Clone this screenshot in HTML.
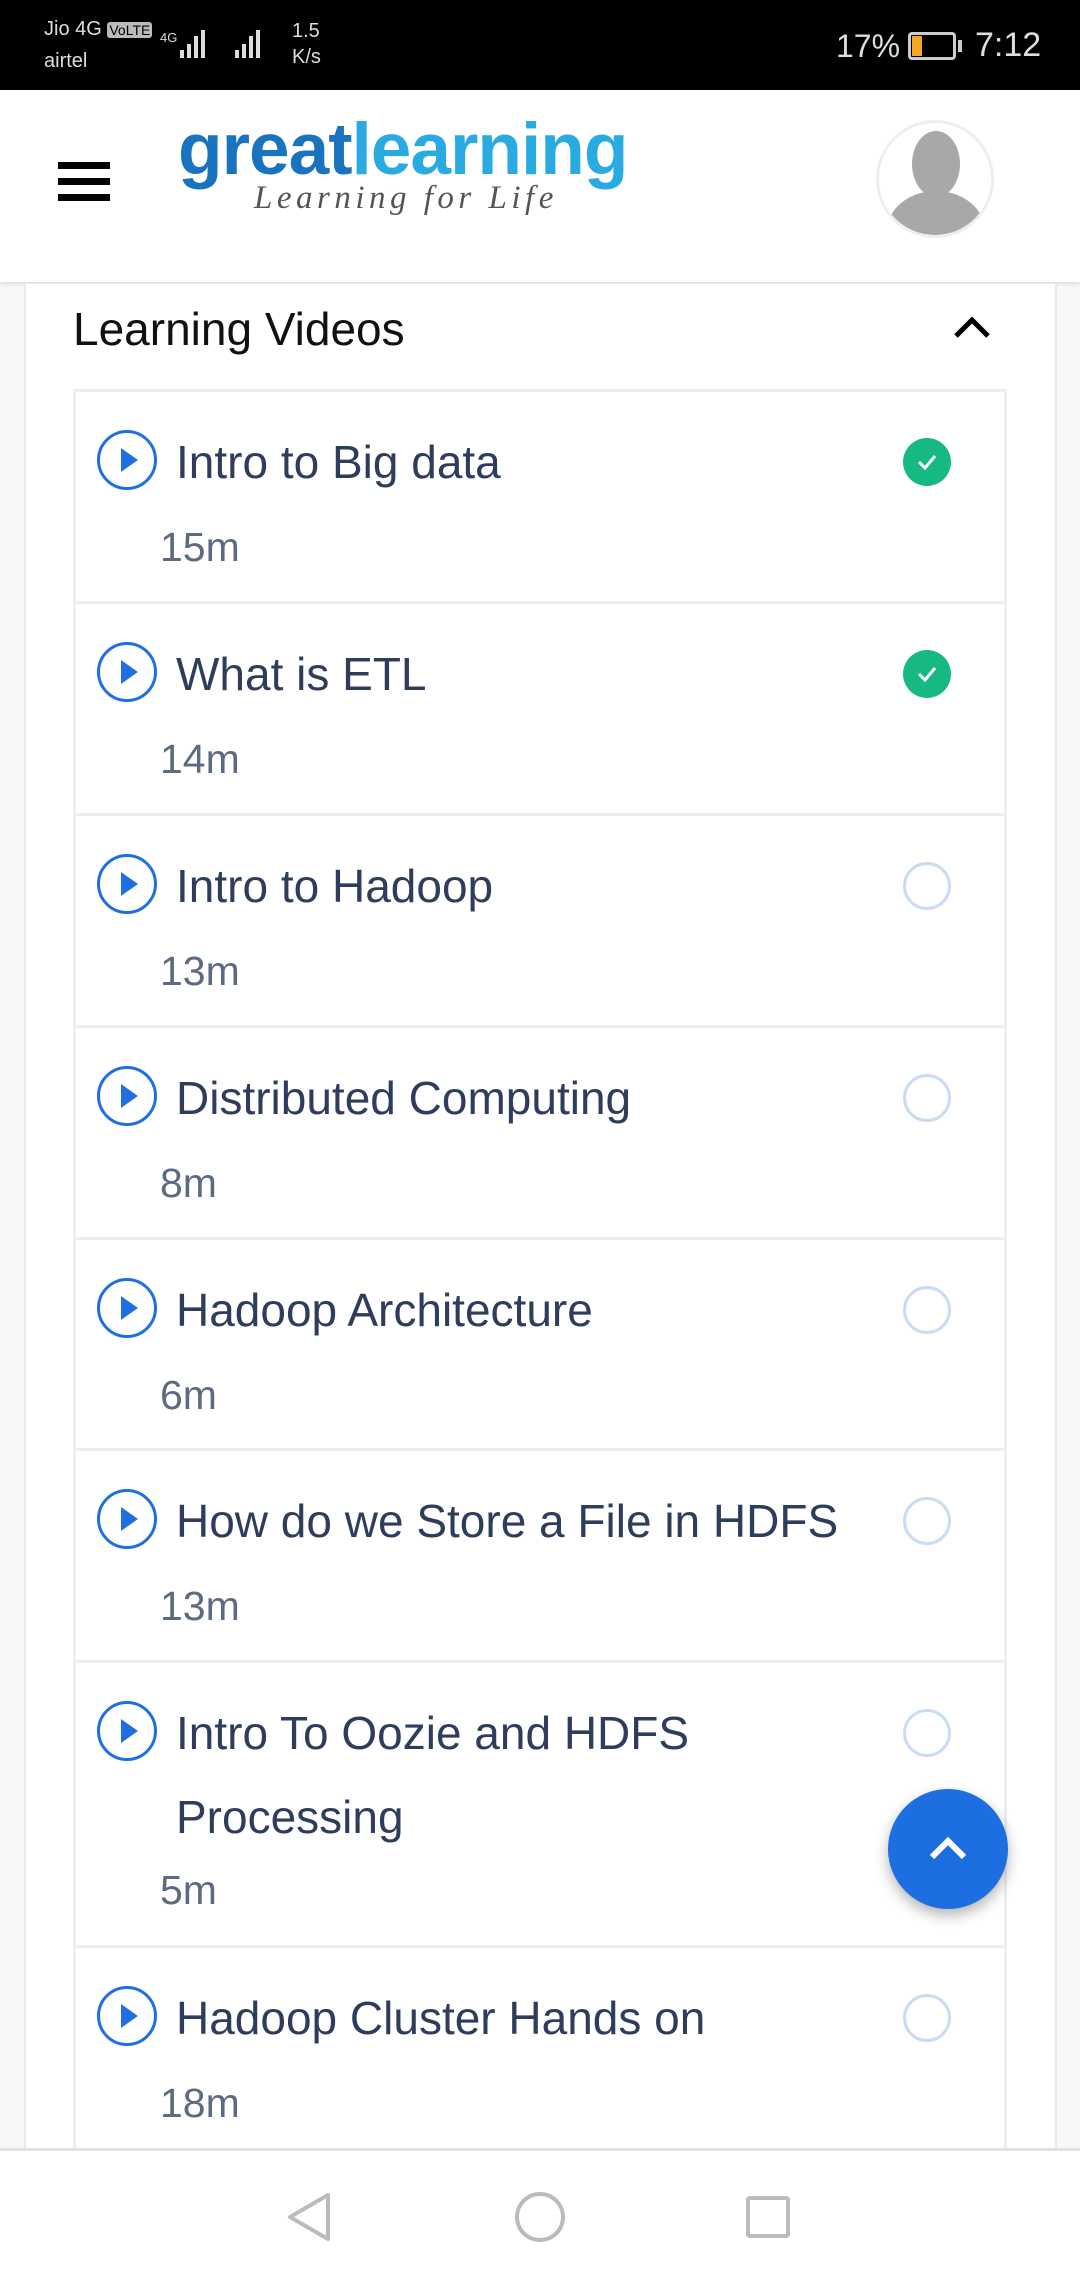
<!DOCTYPE html>
<html><head><meta charset="utf-8"><style>
*{margin:0;padding:0;box-sizing:border-box}
body{width:1080px;height:2280px;position:relative;overflow:hidden;background:#f7f8fa;font-family:"Liberation Sans",sans-serif}
.abs{position:absolute}
.sb{left:0;top:0;width:1080px;height:90px;background:#000;color:#ddd}
.hdr{left:0;top:90px;width:1080px;height:192px;background:#fff;box-shadow:0 2px 4px rgba(0,0,0,.12)}
.card{left:24px;top:284px;width:1033px;height:1870px;background:#fff;border-left:2px solid #e6e8ec;border-right:2px solid #e6e8ec}
.item{position:absolute;left:73px;width:934px;background:#fff;border:3px solid #eceef2}
.t{position:absolute;left:100px;font-size:46px;color:#2f3d5c;line-height:84px}
.d{position:absolute;left:84px;font-size:41px;color:#5c6a82}
.play{position:absolute;left:21px;width:60px;height:60px;border:3px solid #1f6fe0;border-radius:50%}
.play:after{content:"";position:absolute;left:21px;top:15px;border-left:17px solid #1f6fe0;border-top:12px solid transparent;border-bottom:12px solid transparent}
.chk{position:absolute;left:827px;width:48px;height:48px;border-radius:50%}
.done{background:#16b981}
.todo{border:3px solid #c9dcf5}
</style></head><body>
<div class="abs sb">
<div class="abs" style="left:44px;top:18px;font-size:20px">Jio 4G <span style="background:#bbb;color:#000;font-size:14px;padding:0 2px;border-radius:3px">VoLTE</span></div>
<div class="abs" style="left:44px;top:50px;font-size:20px">airtel</div>
<svg class="abs" style="left:160px;top:26px" width="170" height="36"><g fill="#ddd"><rect x="20" y="24" width="4" height="8"/><rect x="27" y="18" width="4" height="14"/><rect x="34" y="10" width="4" height="22"/><rect x="41" y="4" width="4" height="28"/><rect x="75" y="24" width="4" height="8"/><rect x="82" y="18" width="4" height="14"/><rect x="89" y="10" width="4" height="22"/><rect x="96" y="4" width="4" height="28"/></g><text x="0" y="16" font-size="13" fill="#ddd" font-family="Liberation Sans">4G</text></svg>
<div class="abs" style="left:292px;top:18px;font-size:20px;line-height:26px">1.5<br>K/s</div>
<div class="abs" style="left:836px;top:28px;font-size:32px">17%</div>
<div class="abs" style="left:908px;top:32px;width:48px;height:28px;border:3px solid #ccc;border-radius:4px"><div style="width:10px;height:20px;background:#f5a623;margin:1px"></div></div>
<div class="abs" style="left:958px;top:40px;width:4px;height:12px;background:#ccc"></div>
<div class="abs" style="left:975px;top:26px;font-size:34px">7:12</div>
</div>
<div class="abs hdr">
<div class="abs" style="left:58px;top:72px;width:52px;height:7px;background:#000"></div>
<div class="abs" style="left:58px;top:88px;width:52px;height:7px;background:#000"></div>
<div class="abs" style="left:58px;top:104px;width:52px;height:7px;background:#000"></div>
<div class="abs" style="left:178px;top:20px;font-size:73px;font-weight:bold;letter-spacing:-1px;line-height:80px"><span style="color:#1a73be">great</span><span style="color:#29abe2">learning</span></div>
<div class="abs" style="left:254px;top:90px;font-family:'Liberation Serif',serif;font-style:italic;font-size:33px;letter-spacing:4.5px;color:#555">Learning for Life</div>
<div class="abs" style="left:876px;top:30px;width:118px;height:118px;border-radius:50%;border:3px solid #eee;overflow:hidden;background:#fff">
<div class="abs" style="left:33px;top:8px;width:48px;height:66px;border-radius:50%;background:#a8a8a8"></div>
<div class="abs" style="left:8px;top:68px;width:98px;height:80px;border-radius:50% 50% 0 0;background:#a8a8a8"></div></div>
</div>
<div class="abs card"></div>
<div class="abs" style="left:73px;top:302px;font-size:46px;color:#111">Learning Videos</div>
<svg class="abs" style="left:950px;top:312px" width="44" height="30"><path d="M6 24 L22 8 L38 24" stroke="#000" stroke-width="5" fill="none"/></svg>

<div class="item" style="top:389px;height:215px"><div class="play" style="top:38px"></div><div class="t" style="top:28px">Intro to Big data</div><div class="chk done" style="top:46px"><svg width="48" height="48"><path d="M16 24 L22 30 L32 18" stroke="#fff" stroke-width="3" fill="none"/></svg></div><div class="d" style="top:132px">15m</div></div>
<div class="item" style="top:601px;height:215px"><div class="play" style="top:38px"></div><div class="t" style="top:28px">What is ETL</div><div class="chk done" style="top:46px"><svg width="48" height="48"><path d="M16 24 L22 30 L32 18" stroke="#fff" stroke-width="3" fill="none"/></svg></div><div class="d" style="top:132px">14m</div></div>
<div class="item" style="top:813px;height:215px"><div class="play" style="top:38px"></div><div class="t" style="top:28px">Intro to Hadoop</div><div class="chk todo" style="top:46px"></div><div class="d" style="top:132px">13m</div></div>
<div class="item" style="top:1025px;height:215px"><div class="play" style="top:38px"></div><div class="t" style="top:28px">Distributed Computing</div><div class="chk todo" style="top:46px"></div><div class="d" style="top:132px">8m</div></div>
<div class="item" style="top:1237px;height:214px"><div class="play" style="top:38px"></div><div class="t" style="top:28px">Hadoop Architecture</div><div class="chk todo" style="top:46px"></div><div class="d" style="top:132px">6m</div></div>
<div class="item" style="top:1448px;height:215px"><div class="play" style="top:38px"></div><div class="t" style="top:28px">How do we Store a File in HDFS</div><div class="chk todo" style="top:46px"></div><div class="d" style="top:132px">13m</div></div>
<div class="item" style="top:1660px;height:288px"><div class="play" style="top:38px"></div><div class="t" style="top:28px">Intro To Oozie and HDFS<br>Processing</div><div class="chk todo" style="top:46px"></div><div class="d" style="top:204px">5m</div></div>
<div class="item" style="top:1945px;height:240px"><div class="play" style="top:38px"></div><div class="t" style="top:28px">Hadoop Cluster Hands on</div><div class="chk todo" style="top:46px"></div><div class="d" style="top:132px">18m</div></div>

<div class="abs" style="left:888px;top:1789px;width:120px;height:120px;border-radius:50%;background:#1d6ee0;box-shadow:0 6px 14px rgba(0,0,0,.3)"><svg width="120" height="120"><path d="M44 68 L60 52 L76 68" stroke="#fff" stroke-width="6" fill="none"/></svg></div>

<div class="abs" style="left:0;top:2148px;width:1080px;height:140px;background:#fff;border-top:3px solid #e2e2e2">
<svg width="1080" height="132"><g stroke="#bbb" stroke-width="4" fill="none"><path d="M328 44 L290 66 L328 88 Z" stroke-linejoin="round"/><circle cx="540" cy="66" r="23"/><rect x="748" y="47" width="40" height="38" rx="2"/></g></svg></div>
</body></html>
